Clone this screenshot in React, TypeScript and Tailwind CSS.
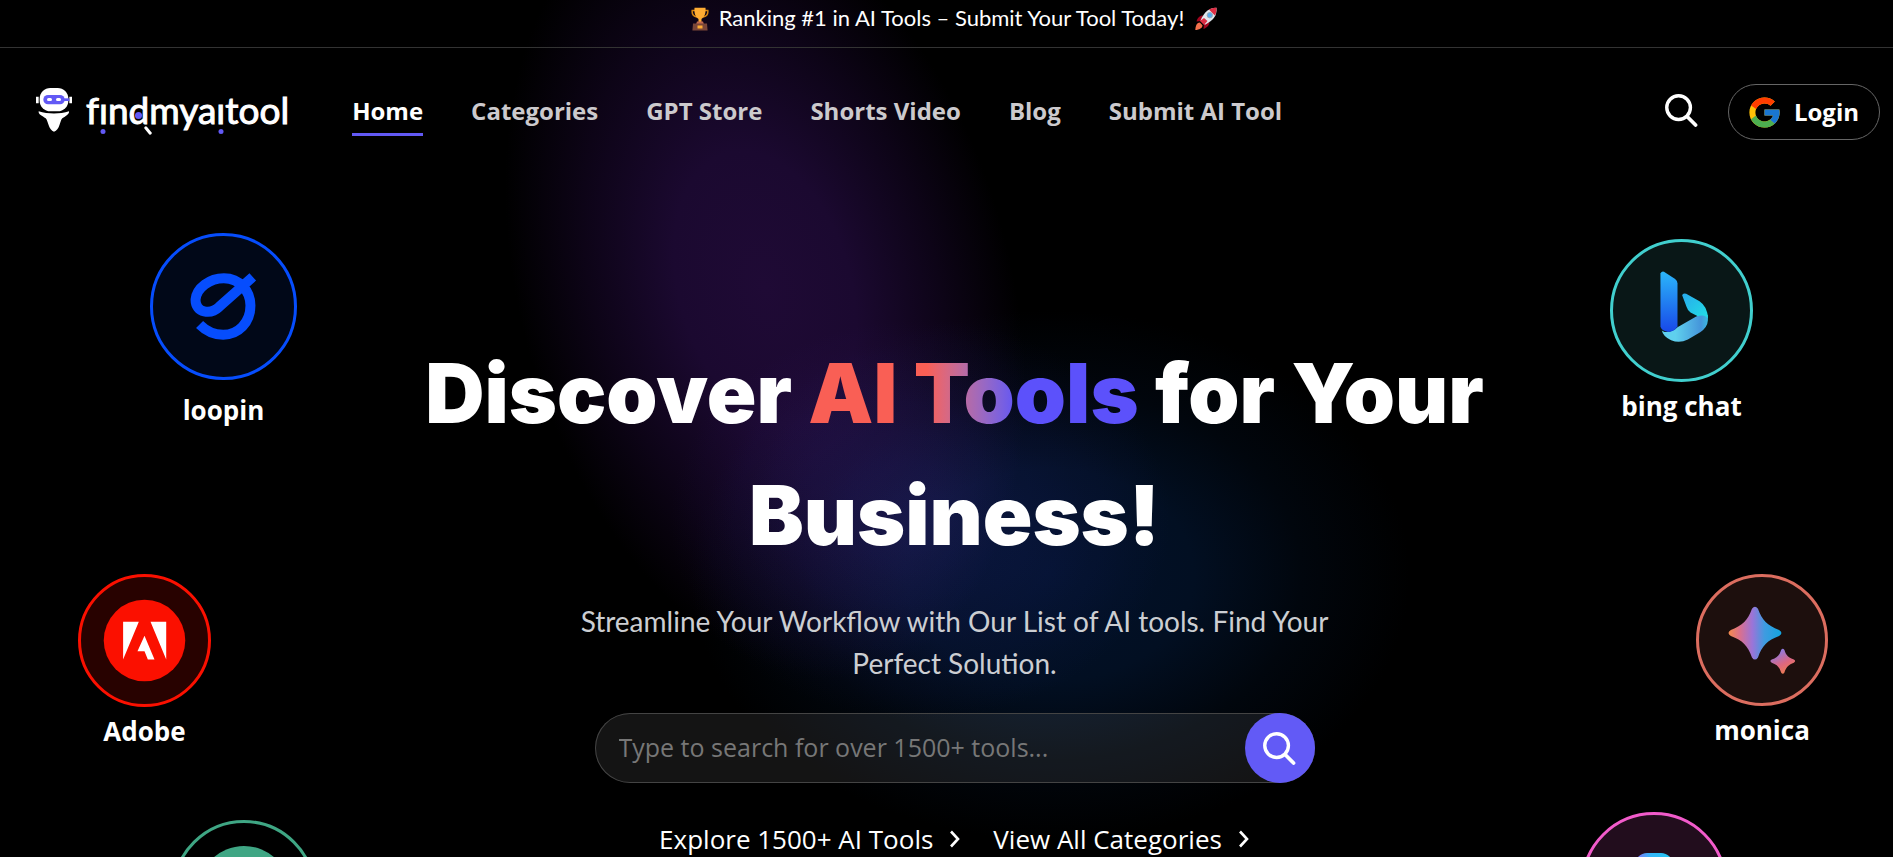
import React from "react";

const navItems = ["Home", "Categories", "GPT Store", "Shorts Video", "Blog", "Submit AI Tool"];

function SearchIcon({ className }: { className?: string }) {
  return (
    <svg viewBox="0 0 34 34" fill="none" stroke="currentColor" strokeLinecap="round" className={className} aria-hidden="true">
      <circle cx="14" cy="14" r="12.2" strokeWidth="3.5" />
      <path d="M23 23.5 31.5 32" strokeWidth="3.8" />
    </svg>
  );
}

function Chevron() {
  return (
    <svg viewBox="0 0 12 18" className="h-[18px] w-3" fill="none" stroke="currentColor" strokeWidth="2.6" aria-hidden="true">
      <path d="M2 1.5 9 9l-7 7.5" />
    </svg>
  );
}

function Trophy() {
  return (
    <svg viewBox="0 0 18 24" className="h-6 w-[18px]" aria-hidden="true">
      <path d="M4 3.5H1.2C.8 7 2.5 9.5 6 10M14 3.5h2.8C17.2 7 15.5 9.5 12 10" fill="none" stroke="#d9860f" strokeWidth="1.5" />
      <path d="M3.5.8h11c.4 5-.6 9.2-4 11.2V15h-3v-3C4.1 10 3.1 5.8 3.5.8Z" fill="#ffac33" />
      <path d="M6 14.5h6l.8 2.5H5.2Z" fill="#c1694f" />
      <path d="M2 16.5h14l.6 7H1.4Z" fill="#7a4638" />
      <path d="M6.5 18.5h5v3h-5Z" fill="#ffac33" />
    </svg>
  );
}

function Rocket() {
  return (
    <svg viewBox="0 0 24 24" className="h-6 w-6" aria-hidden="true">
      <path d="M9 8.5C5.5 8.5 3.5 11 2.5 14.5l5-.5ZM15.5 15c0 3.5-2.5 5.5-6 7l.5-5.5Z" fill="#a0041e" />
      <path d="M22.5.8C15 1 10.5 4.5 6.5 13.5l4.5 4.3C19.5 13.5 23.2 8.5 22.5.8Z" fill="#dfe6ec" />
      <path d="M22.5.8c-3 0-5.5.5-7.6 1.7l6 5.9c1.3-2.2 1.7-4.7 1.6-7.6Z" fill="#dd2e44" />
      <path d="m10 11 3.5 3-3.5 4-4-4Z" fill="#dd2e44" />
      <circle cx="15.8" cy="8.2" r="2.7" fill="#55acee" stroke="#9aabb8" />
      <path d="M5.8 15.5C3 15.5 1.5 18.5 1.3 23c4-.2 7.2-2 7.2-4.8Z" fill="#f4704c" />
    </svg>
  );
}

function RobotMark() {
  return (
    <svg viewBox="0 0 108 132" className="h-11 w-9" aria-hidden="true">
      <path d="M0 26h8v20H0ZM100 26h8v20h-8Z" fill="#fff" />
      <rect x="11" y="0" width="86" height="70" rx="32" fill="#fff" />
      <rect x="22" y="21" width="64" height="28" rx="14" fill="#6259f5" />
      <path d="M82 31h18v8H82Z" fill="#6259f5" />
      <rect x="33" y="30" width="15" height="9" rx="4.5" fill="#fff" />
      <rect x="60" y="30" width="15" height="9" rx="4.5" fill="#fff" />
      <path d="M8 70c28 9 64 9 91 0 2 8-10 15-20 21-7 6-8 37-25 40-16-3-18-34-25-40C19 84 6 79 8 70Z" fill="#fff" />
    </svg>
  );
}

function Logo() {
  return (
    <a href="#" aria-label="findmyaitool" className="flex items-center gap-3.5 pb-1">
      <RobotMark />
      <span className="flex font-['Lato'] text-[37px] leading-11 font-normal text-white [-webkit-text-stroke:1px_white]">
        f
        <span className="relative">
          ı
          <i className="absolute -bottom-0.5 left-1/2 size-[5px] -translate-x-1/2 rounded-full bg-[#6259f5]" />
        </span>
        n
        <span className="relative">
          d
          <i className="absolute top-6 left-1.5 size-[7px] rounded-full bg-[#6259f5]" />
          <i className="absolute -right-1 bottom-0 h-[3px] w-2.5 rotate-50 rounded-full bg-white" />
        </span>
        mya
        <span className="relative">
          ı
          <i className="absolute -bottom-0.5 left-1/2 size-[5px] -translate-x-1/2 rounded-full bg-[#6259f5]" />
        </span>
        tool
      </span>
    </a>
  );
}

function GoogleG() {
  return (
    <svg viewBox="3.5 3.5 41 41" className="size-[31px]" aria-hidden="true">
      <path fill="#FFC107" d="M43.611 20.083H42V20H24v8h11.303c-1.649 4.657-6.080 8-11.303 8-6.627 0-12-5.373-12-12s5.373-12 12-12c3.059 0 5.842 1.154 7.961 3.039l5.657-5.657C34.046 6.053 29.268 4 24 4 12.955 4 4 12.955 4 24s8.955 20 20 20 20-8.955 20-20c0-1.341-.138-2.650-.389-3.917z" />
      <path fill="#FF3D00" d="m6.306 14.691 6.571 4.819C14.655 15.108 18.961 12 24 12c3.059 0 5.842 1.154 7.961 3.039l5.657-5.657C34.046 6.053 29.268 4 24 4 16.318 4 9.656 8.337 6.306 14.691z" />
      <path fill="#4CAF50" d="M24 44c5.166 0 9.860-1.977 13.409-5.192l-6.190-5.238C29.211 35.091 26.715 36 24 36c-5.202 0-9.619-3.317-11.283-7.946l-6.522 5.025C9.505 39.556 16.227 44 24 44z" />
      <path fill="#1976D2" d="M43.611 20.083H42V20H24v8h11.303c-.792 2.237-2.231 4.166-4.087 5.571l6.193 5.238C36.971 39.205 44 34 44 24c0-1.341-.138-2.650-.389-3.917z" />
    </svg>
  );
}

function LoopinMark() {
  return (
    <svg viewBox="60 40 442 442" className="size-full" fill="none" stroke="#064dfd" strokeWidth="30" aria-hidden="true">
      <path d="M369 172 268 262C243 286 196 281 197 240 200 205 240 176 282 176 330 176 362 215 362 258 362 310 325 346 280 346 252 346 230 336 209 315" strokeLinejoin="round" />
    </svg>
  );
}

function BingMark() {
  return (
    <svg viewBox="92 57 428 428" className="size-full" aria-hidden="true">
      <defs>
        <linearGradient id="bingStem" x1="0" y1="0" x2="0" y2="1">
          <stop offset="0" stopColor="#2bb6fa" />
          <stop offset="1" stopColor="#1848e8" />
        </linearGradient>
        <linearGradient id="bingTop" x1="0" y1="0" x2="1" y2="1">
          <stop offset="0" stopColor="#28a9ec" />
          <stop offset="1" stopColor="#22dfe4" />
        </linearGradient>
        <linearGradient id="bingBase">
          <stop offset=".3" stopColor="#5fd0ee" />
          <stop offset=".85" stopColor="#4595da" />
          <stop offset="1" stopColor="#3ab9e0" />
        </linearGradient>
      </defs>
      <path d="M247 330C253 340 282 335 294 321L350 289Q368 281 385 284V300Q384 321 362 336L325 358Q300 370 275 360 250 348 247 330Z" fill="url(#bingBase)" />
      <path d="M243 160Q248 151 257 157L287 177Q294 182 294 190V318Q285 335 266 335 248 334 243 320Z" fill="url(#bingStem)" />
      <path d="M308 225Q310 218 320 221L360 243Q385 260 385 295 376 281 355 288L333 277Q325 273 321 260Z" fill="url(#bingTop)" />
    </svg>
  );
}

function AdobeMark() {
  return (
    <svg viewBox="55 41 398 398" className="size-full" aria-hidden="true">
      <circle cx="254" cy="240" r="122" fill="#fb1000" />
      <path d="M190 184h47l-47 113ZM272 184h47v113ZM254 226l30 71h-20l-10-25h-21Z" fill="#fff" />
    </svg>
  );
}

function MonicaMark() {
  return (
    <svg viewBox="79 42 394 394" className="size-full" aria-hidden="true">
      <defs>
        <linearGradient id="monicaBig">
          <stop offset="0" stopColor="#f58a4b" />
          <stop offset=".22" stopColor="#d9708f" />
          <stop offset=".45" stopColor="#9b74d8" />
          <stop offset=".68" stopColor="#3f9be0" />
          <stop offset="1" stopColor="#12a5df" />
        </linearGradient>
        <linearGradient id="monicaSmall" x1=".2" y1="0" x2=".7" y2="1">
          <stop offset=".1" stopColor="#8a7be6" />
          <stop offset=".6" stopColor="#dd6780" />
          <stop offset="1" stopColor="#f0804a" />
        </linearGradient>
      </defs>
      <path d="M246 146Q255 133 264 146C276 180 292 196 327 209Q341 218 327 227C292 240 276 256 264 291Q255 304 246 291C234 256 218 240 183 227Q169 218 183 209C218 196 234 180 246 146Z" fill="url(#monicaBig)" />
      <path d="M333 269Q338 261 343 269C348 286 356 292 371 297Q379 302 371 307C356 312 348 320 343 336Q338 344 333 336C328 320 320 312 305 307Q297 302 305 297C320 292 328 286 333 269Z" fill="url(#monicaSmall)" />
    </svg>
  );
}

function GreenMark() {
  return (
    <svg viewBox="0 0 144 144" className="size-full" aria-hidden="true">
      <circle cx="72" cy="72" r="46" fill="#3fa684" />
    </svg>
  );
}

function PinkMark() {
  return (
    <svg viewBox="0 0 146 146" className="size-full" aria-hidden="true">
      <defs>
        <linearGradient id="pinkTop">
          <stop offset="0" stopColor="#8b6df5" />
          <stop offset=".4" stopColor="#35b5f8" />
          <stop offset="1" stopColor="#22c8f0" />
        </linearGradient>
      </defs>
      <rect x="54" y="41" width="38" height="60" rx="12" fill="url(#pinkTop)" />
    </svg>
  );
}

type ToolProps = { name: string; place: string; disc: string; children: React.ReactNode };

function Tool({ name, place, disc, children }: ToolProps) {
  return (
    <a href="#" className={`absolute flex flex-col items-center ${place}`}>
      <span className={`block shrink-0 overflow-hidden rounded-full border-3 ${disc}`}>
        <span className="-m-[3px] block">{children}</span>
      </span>
      <span className="text-[26px] leading-9 font-bold whitespace-nowrap text-white">{name}</span>
    </a>
  );
}

export default function App() {
  return (
    <div className="relative isolate flex min-h-screen flex-col overflow-hidden bg-black font-['Open_Sans','Noto_Sans',sans-serif] text-white">
      <div className="pointer-events-none absolute inset-0 -z-10" aria-hidden="true">
        <div className="absolute -top-28 left-[520px] h-[800px] w-[490px] -rotate-16 rounded-full bg-[radial-gradient(closest-side,#1f0a35_0%,#1b0930_35%,#0d0417_70%,transparent_100%)]" />
        <div className="absolute top-[310px] left-[690px] h-[530px] w-[720px] rounded-full bg-[radial-gradient(closest-side,#02112a_0%,#020f22_40%,#01060d_70%,transparent_100%)] mix-blend-screen" />
        <div className="absolute top-[320px] left-[670px] h-[400px] w-[500px] rounded-full bg-[radial-gradient(closest-side,#0a071e_0%,#060413_45%,transparent_100%)] mix-blend-screen" />
      </div>

      <div className="flex h-12 items-start justify-center gap-2.5 border-b border-[#333] pt-[7px] pl-4">
        <Trophy />
        <p className="font-['Lato'] text-[22px] leading-[22px] font-normal">Ranking #1 in AI Tools – Submit Your Tool Today!</p>
        <Rocket />
      </div>

      <header className="flex h-32 items-center pr-[13px] pl-9">
        <Logo />
        <nav className="ml-[63px]">
          <ul className="flex gap-12">
            {navItems.map((item, i) => (
              <li key={item}>
                <a
                  href="#"
                  className={
                    i === 0
                      ? "block border-b-3 border-[#6259f5] text-[24px] leading-11 font-bold text-white"
                      : "block border-b-3 border-transparent text-[24px] leading-11 font-bold text-[#cccacd]"
                  }
                >
                  {item}
                </a>
              </li>
            ))}
          </ul>
        </nav>
        <div className="ml-auto flex items-center gap-[30px]">
          <button type="button" aria-label="Search" className="pb-1">
            <SearchIcon className="size-[33px]" />
          </button>
          <button type="button" className="flex h-14 items-center gap-3.5 rounded-full border border-[#666] px-5 text-[24px] font-bold">
            <GoogleG />
            Login
          </button>
        </div>
      </header>

      <main className="flex flex-col items-center pt-[157px] pl-4">
        <h1 className="max-w-[1200px] text-center font-['Inter'] text-[82px] leading-[122px] font-black">
          Discover{" "}
          <span className="bg-linear-to-r from-[#f95f55] from-36% to-[#5c51fb] to-64% bg-clip-text text-transparent">AI Tools</span> for Your
          <br />
          Business!
        </h1>
        <p className="mt-[23px] max-w-[780px] text-center font-['Lato'] text-[28px] leading-[42px] text-[#ccced2]">
          Streamline Your Workflow with Our List of AI tools. Find Your Perfect Solution.
        </p>
        <form className="mt-[29px] flex h-[70px] w-[720px] max-w-full rounded-full bg-white/8 ring-1 ring-[#444] ring-inset" onSubmit={(e) => e.preventDefault()}>
          <input
            type="text"
            aria-label="Search tools"
            placeholder="Type to search for over 1500+ tools..."
            className="min-w-0 flex-1 bg-transparent px-6 text-[25px] outline-none placeholder:text-[#777]"
          />
          <button type="submit" aria-label="Search" className="flex size-[70px] items-center justify-center rounded-full bg-[#625af6]">
            <SearchIcon className="size-[33px]" />
          </button>
        </form>
        <div className="mt-10 flex gap-8 text-[26px] leading-8">
          <a href="#" className="flex items-center gap-4">
            Explore 1500+ AI Tools <Chevron />
          </a>
          <a href="#" className="flex items-center gap-4">
            View All Categories <Chevron />
          </a>
        </div>
      </main>

      <Tool name="loopin" place="left-[150px] top-[233px] gap-3" disc="size-[147px] border-[#064dfd] bg-[#010818]">
        <LoopinMark />
      </Tool>
      <Tool name="bing chat" place="right-[140px] top-[239px] gap-1.5" disc="size-[143px] border-[#41cfce] bg-[#091717]">
        <BingMark />
      </Tool>
      <Tool name="Adobe" place="left-[78px] top-[574px] gap-1.5" disc="size-[133px] border-[#fb1000] bg-[#280200]">
        <AdobeMark />
      </Tool>
      <Tool name="monica" place="right-[65px] top-[574px] gap-1.5" disc="size-[132px] border-[#dc6d5f] bg-[#1d0f0d]">
        <MonicaMark />
      </Tool>
      <Tool name="" place="left-[172px] top-[820px]" disc="size-36 border-[#3fa684] bg-black">
        <GreenMark />
      </Tool>
      <Tool name="" place="right-[166px] top-[812px]" disc="size-[146px] border-[#f25bcb] bg-[#220d1d]">
        <PinkMark />
      </Tool>
    </div>
  );
}
